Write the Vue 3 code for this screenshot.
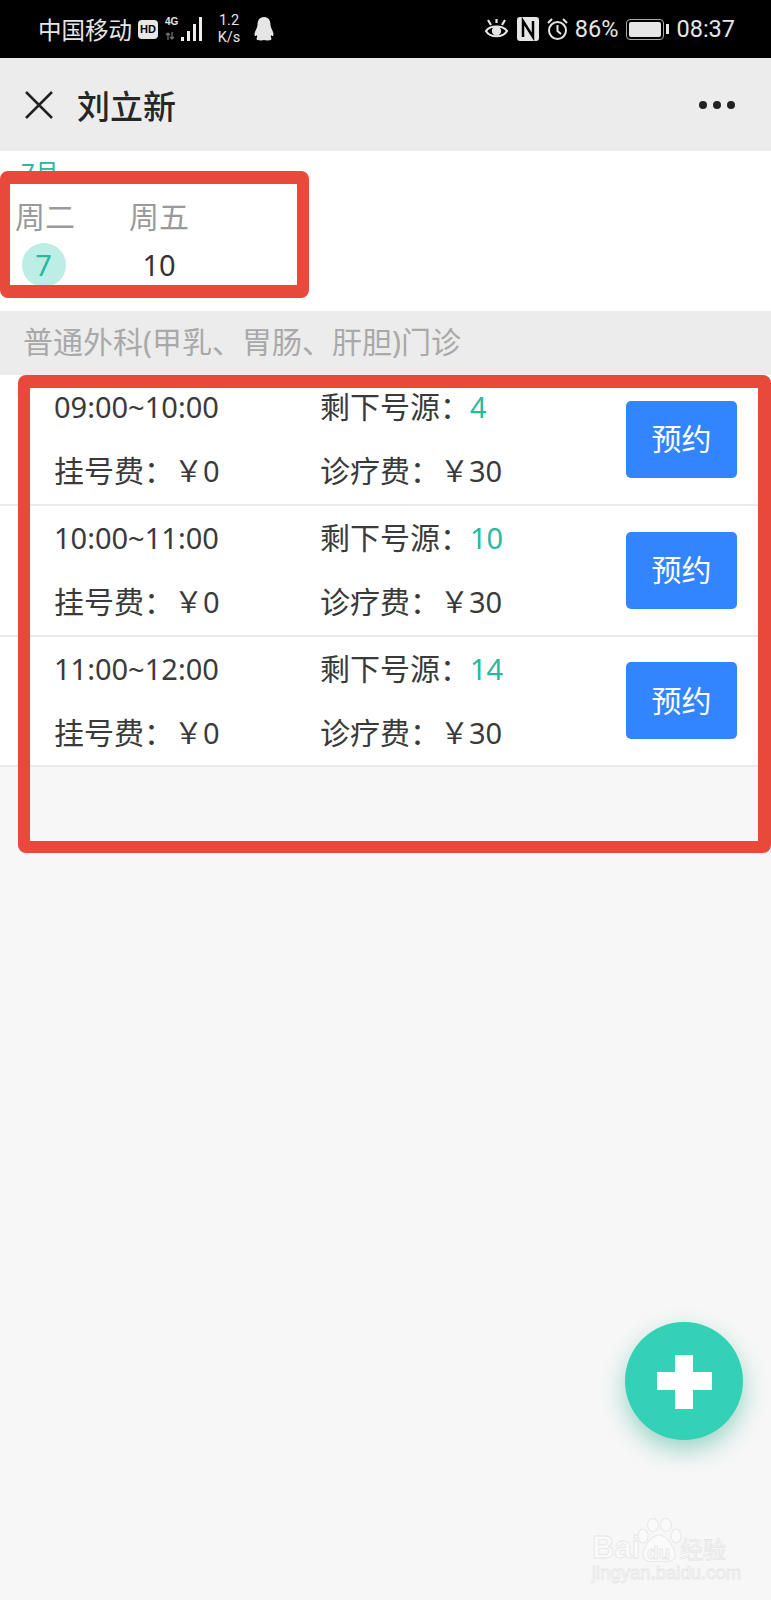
<script setup>
const days = [
  { week: '周二', day: 7, active: true },
  { week: '周五', day: 10, active: false },
];

const slots = [
  { time: '09:00~10:00', left: 4 },
  { time: '10:00~11:00', left: 10 },
  { time: '11:00~12:00', left: 14 },
];
</script>

<template>
  <div class="page">
    <div class="status-bar">
      <div class="status-left">
        <span class="carrier">中国移动</span>
        <span class="hd">HD</span>
        <span class="net">
          <span class="net-label">4G</span>
          <svg class="updown" width="10" height="8" viewBox="0 0 10 8" stroke="#777" stroke-width="1.200" fill="none">
            <path d="M3 8V1M1 3L3 1L5 3M7 0V7M5 5L7 7L9 5" />
          </svg>
          <svg class="signal" width="24" height="26" viewBox="0 0 24 26">
            <rect x="0" y="21" width="3" height="4" fill="#eee" />
            <rect x="6" y="15" width="3" height="10" fill="#eee" />
            <rect x="12" y="8" width="3" height="17" fill="#eee" />
            <rect x="18" y="1" width="3" height="24" fill="#eee" />
          </svg>
        </span>
        <span class="speed">1.2<br />K/s</span>
        <svg class="penguin" width="22" height="26" viewBox="0 0 22 26">
          <path d="M11 1C6 1 4.500 5 4.500 9C4.500 11 3 13 2 16C1 19 1.500 20.500 3 20L4 19C4.500 21 3.500 22 3.500 23C4 25 9 24.500 11 24C13 24.500 18 25 18.500 23C18.500 22 17.500 21 18 19L19 20C20.500 20.500 21 19 20 16C19 13 17.500 11 17.500 9C17.500 5 16 1 11 1Z" fill="#e6e6e6" />
        </svg>
      </div>
      <div class="status-right">
        <svg width="25" height="24" viewBox="0 0 25 24" fill="none" stroke="#e6e6e6" stroke-width="2.200">
          <path d="M2 14C6 8 19 8 23 14C19 21 6 21 2 14Z" />
          <circle cx="12.500" cy="14" r="3.600" fill="#e6e6e6" />
          <path d="M4 3L7 8M12.500 2V6M21 3L18 8" />
        </svg>
        <svg class="nfc" width="22" height="24" viewBox="0 0 22 24">
          <rect width="22" height="24" rx="3" fill="#e6e6e6" />
          <path d="M6 20V4L16 20V4" fill="none" stroke="#000" stroke-width="2.500" />
        </svg>
        <svg class="alarm" width="23" height="24" viewBox="0 0 23 24" fill="none" stroke="#e6e6e6" stroke-width="2">
          <circle cx="11.500" cy="13.500" r="8.500" />
          <path d="M11.500 8V14L15 17M2 6L6 2M21 6L17 2" />
        </svg>
        <span class="percent">86%</span>
        <span class="battery"><span class="battery-fill"></span></span>
        <span class="battery-tip"></span>
        <span class="clock">08:37</span>
      </div>
    </div>

    <header class="title-bar">
      <svg class="close" width="28" height="28" viewBox="0 0 28 28" stroke="#222" stroke-width="2.500">
        <path d="M1 1L27 27M27 1L1 27" />
      </svg>
      <h1>刘立新</h1>
      <div class="more"><i></i><i></i><i></i></div>
    </header>

    <section class="calendar">
      <div class="month">7月</div>
      <div class="days">
        <div v-for="item in days" :key="item.day" class="day">
          <span class="week">{{ item.week }}</span>
          <span class="num" :class="{ active: item.active }">{{ item.day }}</span>
        </div>
      </div>
    </section>

    <div class="dept">普通外科(甲乳、胃肠、肝胆)门诊</div>

    <ul class="slots">
      <li v-for="slot in slots" :key="slot.time" class="slot">
        <div class="slot-info">
          <span class="time">{{ slot.time }}</span>
          <span>剩下号源：<em>{{ slot.left }}</em></span>
          <span>挂号费：<b>￥0</b></span>
          <span>诊疗费：<b>￥30</b></span>
        </div>
        <button class="book">预约</button>
      </li>
    </ul>

    <div class="mark mark-top"></div>
    <div class="mark mark-bottom"></div>

    <div class="fab"><span class="fab-h"></span><span class="fab-v"></span></div>

    <div class="watermark">
      <svg class="paw" width="46" height="46" viewBox="0 0 46 46" fill="#fafafa" stroke="#e9e9e9" stroke-width="1.200">
        <ellipse cx="7" cy="18" rx="5" ry="7" />
        <ellipse cx="17" cy="7" rx="5.500" ry="6.500" />
        <ellipse cx="30" cy="7" rx="5.500" ry="6.500" />
        <ellipse cx="40" cy="18" rx="5" ry="7" />
        <path d="M23 17C16 17 6 30 7 38C8 45 18 44 23 43C28 44 38 45 39 38C40 30 30 17 23 17Z" />
      </svg>
      <span class="wm-bai">Bai</span>
      <span class="wm-du">du</span>
      <span class="wm-cn">经验</span>
      <span class="wm-url">jingyan.baidu.com</span>
    </div>
  </div>
</template>

<style>
body {
  background: #f7f7f7;
}
</style>

<style scoped>
.page {
  position: relative;
  width: 771px;
  height: 1600px;
  overflow: hidden;
  background: #f7f7f7;
  font-family: "Noto Sans", "Noto Sans CJK SC", sans-serif;
  color: #3a3a3a;
}

.status-bar {
  height: 58px;
  background: #000;
  color: #e6e6e6;
  display: flex;
  justify-content: space-between;
  align-items: center;
  padding: 0 36px 0 38px;
  box-sizing: border-box;
}
.status-left,
.status-right {
  display: flex;
  align-items: center;
}
.carrier {
  font-size: 23.500px;
  width: 100px;
}
.hd {
  width: 20px;
  height: 19px;
  background: #e6e6e6;
  color: #000;
  border-radius: 4px;
  font: bold 11px/19px "Liberation Sans", sans-serif;
  text-align: center;
}
.net {
  position: relative;
  width: 38px;
  height: 26px;
  margin-left: 7px;
}
.net-label {
  position: absolute;
  left: 0;
  top: 0;
  font: bold 10px/11px "Liberation Sans", sans-serif;
}
.updown {
  position: absolute;
  left: 0;
  top: 16px;
}
.signal {
  position: absolute;
  left: 16px;
  top: 0;
}
.speed {
  width: 36px;
  margin-left: 8px;
  font: 14.500px/17px Roboto, sans-serif;
  text-align: center;
}
.penguin {
  margin-left: 6px;
}
.status-right svg {
  display: block;
}
.nfc {
  margin-left: 8px;
}
.alarm {
  margin-left: 7px;
}
.percent {
  margin-left: 6px;
  font: 23.500px Roboto, sans-serif;
}
.battery {
  width: 38px;
  height: 21px;
  margin-left: 8px;
  border: 1.500px solid #aaa;
  border-radius: 4px;
  box-sizing: border-box;
  padding: 2px;
}
.battery-fill {
  display: block;
  height: 100%;
  background: #e6e6e6;
  border-radius: 2px;
}
.battery-tip {
  width: 3px;
  height: 10px;
  margin-left: 2px;
  background: #e6e6e6;
}
.clock {
  margin-left: 7px;
  font: 23.500px Roboto, sans-serif;
}

.title-bar {
  height: 93px;
  background: #ececec;
  display: flex;
  align-items: center;
  padding: 0 36px 0 25px;
  box-sizing: border-box;
}
.close {
  flex: none;
}
.title-bar h1 {
  margin: 0 0 0 24px;
  font-size: 33px;
  font-weight: 500;
  color: #262626;
  flex: 1;
}
.more {
  display: flex;
  gap: 6px;
}
.more i {
  width: 8px;
  height: 8px;
  border-radius: 50%;
  background: #222;
}

.calendar {
  height: 160px;
  background: #fff;
  box-sizing: border-box;
  padding: 6px 0 0 21px;
}
.month {
  font-size: 24px;
  line-height: 30px;
  color: #2bb8a0;
}
.days {
  display: flex;
  gap: 56px;
  margin: 9px 0 0 -5px;
}
.day {
  width: 58px;
  display: flex;
  flex-direction: column;
  align-items: center;
}
.week {
  font-size: 30px;
  line-height: 42px;
  color: #9a9a9a;
  white-space: nowrap;
}
.num {
  width: 44px;
  height: 44px;
  margin-top: 5px;
  border-radius: 50%;
  font-size: 29px;
  line-height: 44px;
  text-align: center;
  color: #333;
}
.num.active {
  background: #bdeee6;
  color: #2bb8a0;
  margin-left: -3px;
}

.dept {
  height: 64px;
  background: #ececec;
  padding-left: 23px;
  font-size: 30px;
  line-height: 62px;
  color: #a9a9a9;
  white-space: nowrap;
}

.slots {
  list-style: none;
  margin: 0;
  padding: 0;
}
.slot {
  height: 130.800px;
  box-sizing: border-box;
  background: #fff;
  border-bottom: 2px solid #e9e9e9;
  display: flex;
  align-items: center;
  justify-content: space-between;
  padding: 0 34px 0 54px;
}
.slot-info {
  display: grid;
  grid-template-columns: 266px auto;
  grid-auto-rows: 64px;
  font-size: 30px;
  line-height: 64px;
}
.slot-info .time,
.slot-info em,
.slot-info b {
  font-size: 29px;
  font-weight: 400;
}
.slot-info em {
  font-style: normal;
  color: #2bb8a0;
}
.book {
  width: 111px;
  height: 77px;
  padding: 0 0 4px;
  border: none;
  border-radius: 5px;
  background: #3385ff;
  color: #fff;
  font-family: inherit;
  font-size: 30px;
}

.mark {
  position: absolute;
  box-sizing: border-box;
  border: 13px solid #e8493a;
  border-radius: 8px;
}
.mark-top {
  left: 0;
  top: 171px;
  width: 309px;
  height: 127px;
  border-left-width: 10px;
  border-right-width: 12px;
}
.mark-bottom {
  left: 18px;
  top: 375px;
  width: 753px;
  height: 478px;
  border-left-width: 12px;
  border-top-width: 13px;
  border-bottom-width: 12px;
}

.fab {
  position: absolute;
  left: 625px;
  top: 1322px;
  width: 118px;
  height: 118px;
  border-radius: 50%;
  background: #33d1b5;
  box-shadow: 0 10px 24px rgba(40, 170, 145, 0.45);
}
.fab-h,
.fab-v {
  position: absolute;
  background: #fff;
}
.fab-h {
  left: 32px;
  top: 50px;
  width: 55px;
  height: 18px;
}
.fab-v {
  left: 50px;
  top: 33px;
  width: 18px;
  height: 54px;
}

.watermark {
  position: absolute;
  left: 592px;
  top: 1518px;
  width: 140px;
  height: 68px;
  color: #fafafa;
  -webkit-text-stroke: 0.800px #e6e6e6;
}
.watermark span {
  position: absolute;
  white-space: nowrap;
}
.paw {
  position: absolute;
  left: 44px;
  top: 0;
}
.wm-bai {
  left: 0;
  top: 12px;
  font: bold 31px/36px "Liberation Sans", sans-serif;
}
.wm-du {
  left: 55px;
  top: 24px;
  font: bold 19px/22px "Liberation Sans", sans-serif;
}
.wm-cn {
  left: 88px;
  top: 16px;
  font-size: 23px;
  line-height: 30px;
}
.wm-url {
  left: 0;
  top: 44px;
  font: 18.500px/22px "Liberation Sans", sans-serif;
}
</style>
